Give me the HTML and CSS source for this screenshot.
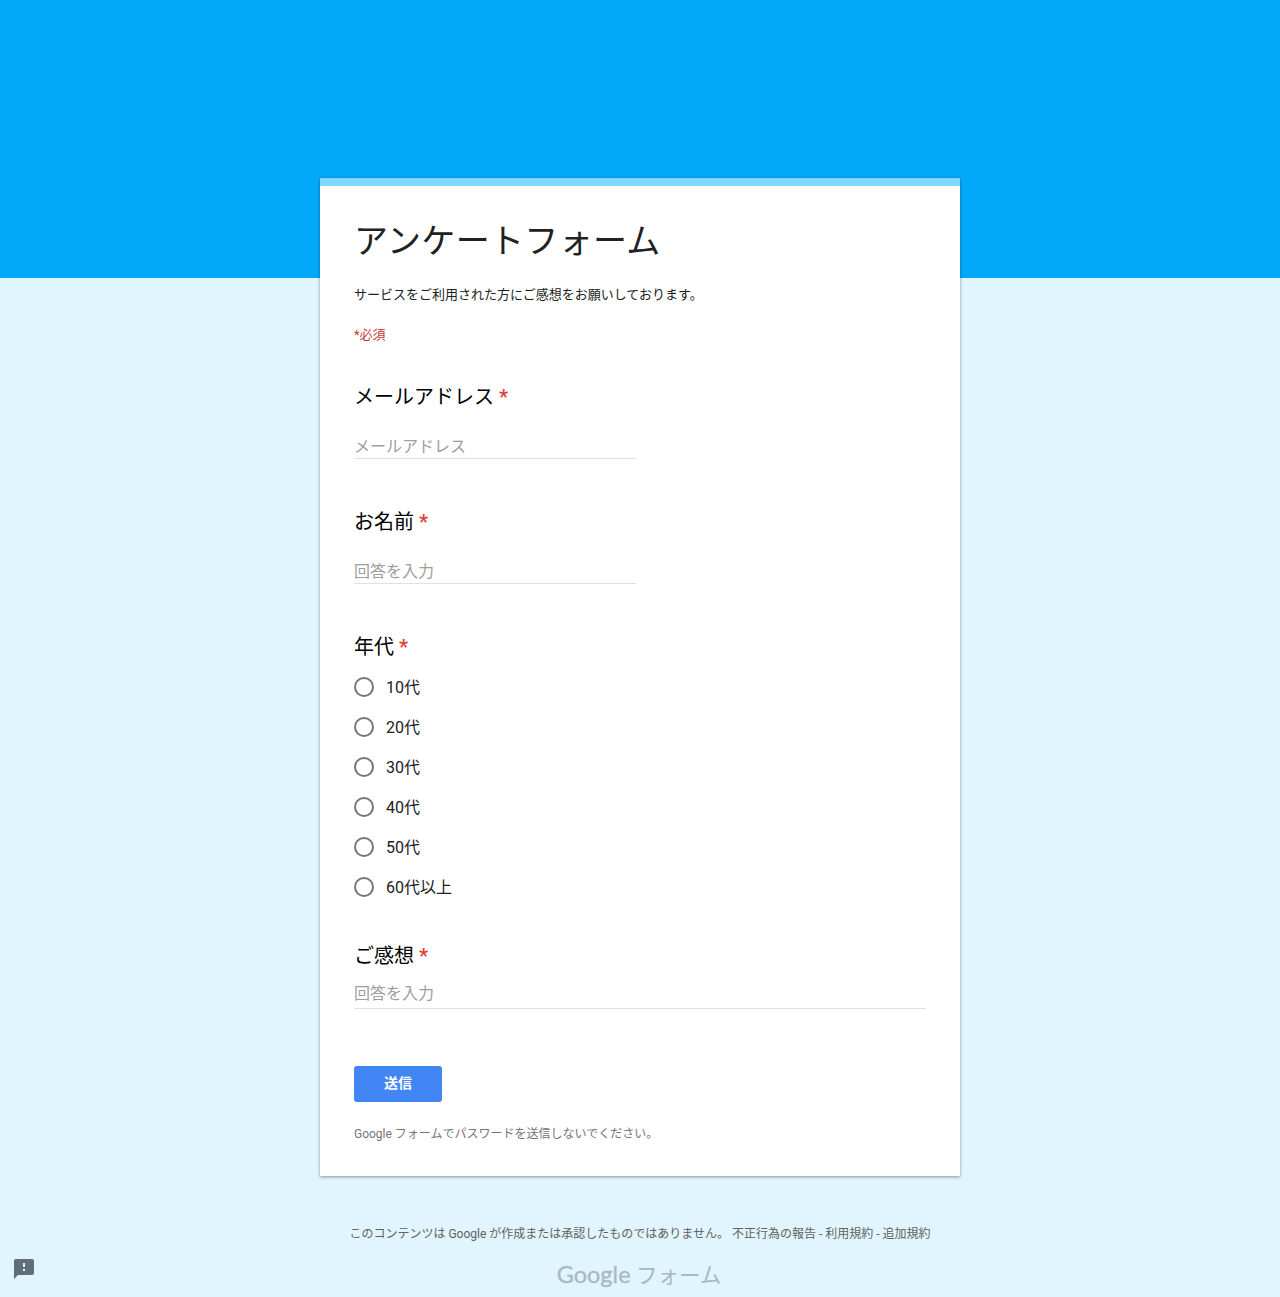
FILE: index.html
```html
<!DOCTYPE html>
<html lang="ja">
<head>
    <meta charset="UTF-8">
    <title>アンケートフォーム</title>
    <link rel="stylesheet" href="styles.css">
</head>
<body>
    <div class="card">
        <h1 class="title">アンケートフォーム</h1>
        <p class="desc">サービスをご利用された方にご感想をお願いしております。</p>
        <p class="required-note">*必須</p>

        <div class="question q-email">
            <div class="label">メールアドレス <span class="star">*</span></div>
            <div class="input short">メールアドレス</div>
        </div>

        <div class="question q-name">
            <div class="label">お名前 <span class="star">*</span></div>
            <div class="input short">回答を入力</div>
        </div>

        <div class="question q-age">
            <div class="label">年代 <span class="star">*</span></div>
            <div class="options">
                <div class="option"><span class="radio"></span>10代</div>
                <div class="option"><span class="radio"></span>20代</div>
                <div class="option"><span class="radio"></span>30代</div>
                <div class="option"><span class="radio"></span>40代</div>
                <div class="option"><span class="radio"></span>50代</div>
                <div class="option"><span class="radio"></span>60代以上</div>
            </div>
        </div>

        <div class="question q-comment">
            <div class="label">ご感想 <span class="star">*</span></div>
            <div class="input long">回答を入力</div>
        </div>

        <button class="submit">送信</button>
        <p class="warning">Google フォームでパスワードを送信しないでください。</p>
    </div>

    <div class="footer">
        <div class="footer-text">このコンテンツは Google が作成または承認したものではありません。 <a>不正行為の報告</a> - <a>利用規約</a> - <a>追加規約</a></div>
        <div class="brand"><span class="brand-google">Google</span> フォーム</div>
    </div>

    <svg class="report" width="24" height="24" viewBox="0 0 24 24">
        <path fill="#5f6e78" d="M20 2H4c-1.100 0-2 .9-2 2v18l4-4h14c1.100 0 2-.9 2-2V4c0-1.100-.9-2-2-2zm-7 12h-2v-2h2v2zm0-4h-2V6h2v4z"/>
    </svg>
</body>
</html>
```

FILE: styles.css
```css
body {
    margin: 0;
    height: 1297px;
    overflow: hidden;
    position: relative;
    font-family: Roboto, "Noto Sans CJK JP", sans-serif;
    color: #212121;
    background: linear-gradient(#03a9f9 278px, #e1f5fe 278px);
}

/* card */
.card {
    box-sizing: border-box;
    width: 640px;
    height: 998px;
    margin: 178px auto 0;
    padding: 0 34px;
    background: #fff;
    border-top: 8px solid #80d8ff;
    box-shadow: 0 1px 3px rgba(0, 0, 0, 0.4);
}

.title {
    margin: 0;
    padding-top: 30px;
    font-size: 34px;
    line-height: 50px;
    font-weight: 400;
    letter-spacing: 0.34px;
    color: #212121;
}

.desc {
    margin: 0;
    padding-top: 20px;
    font-size: 13px;
    line-height: 18px;
}

.required-note {
    margin: 0;
    padding-top: 22px;
    font-size: 13px;
    line-height: 18px;
    color: #c43b3b;
}

/* questions */
.label {
    font-size: 20px;
    line-height: 28px;
    color: #000;
}

.star {
    color: #db4437;
    font-weight: 700;
}

.q-email {
    margin-top: 39px;
}

.q-name {
    margin-top: 49px;
}

.q-age {
    margin-top: 49px;
}

.q-comment {
    margin-top: 35px;
}

.input {
    font-size: 16px;
    line-height: 23px;
    color: #9e9e9e;
    border-bottom: 1px solid #e0e0e0;
    margin-top: 24px;
}

.short {
    width: 282px;
}

.q-comment .input {
    margin-top: 12px;
    line-height: 24px;
    padding-bottom: 2px;
}

.long {
    width: 572px;
}

.options {
    margin-top: 6px;
}

.option {
    box-sizing: border-box;
    display: flex;
    align-items: center;
    height: 40px;
    padding-bottom: 2px;
    font-size: 16px;
    color: #212121;
}

.radio {
    box-sizing: border-box;
    width: 20px;
    height: 20px;
    margin-top: 2px;
    margin-right: 12px;
    border: 2px solid #757575;
    border-radius: 50%;
}

/* submit */
.submit {
    display: block;
    width: 88px;
    height: 36px;
    margin-top: 57px;
    padding: 0 0 4px;
    border: none;
    border-radius: 3px;
    background: #4285f4;
    color: #fff;
    font-family: inherit;
    font-size: 14px;
    font-weight: 700;
}

.warning {
    margin: 0;
    padding-top: 23px;
    font-size: 12px;
    line-height: 18px;
    color: #757575;
}

/* footer */
.footer {
    text-align: center;
}

.footer-text {
    margin-top: 49px;
    font-size: 12px;
    line-height: 18px;
    color: #616161;
}

.brand {
    margin-top: 15px;
    padding-right: 2px;
    font-size: 21.500px;
    line-height: 32px;
    color: #a9b8c2;
}

.brand-google {
    font-family: Lato, sans-serif;
    font-size: 23.5px;
    -webkit-text-stroke: 0.3px #a9b8c2;
}

.report {
    position: absolute;
    left: 12px;
    bottom: 16px;
}
```
